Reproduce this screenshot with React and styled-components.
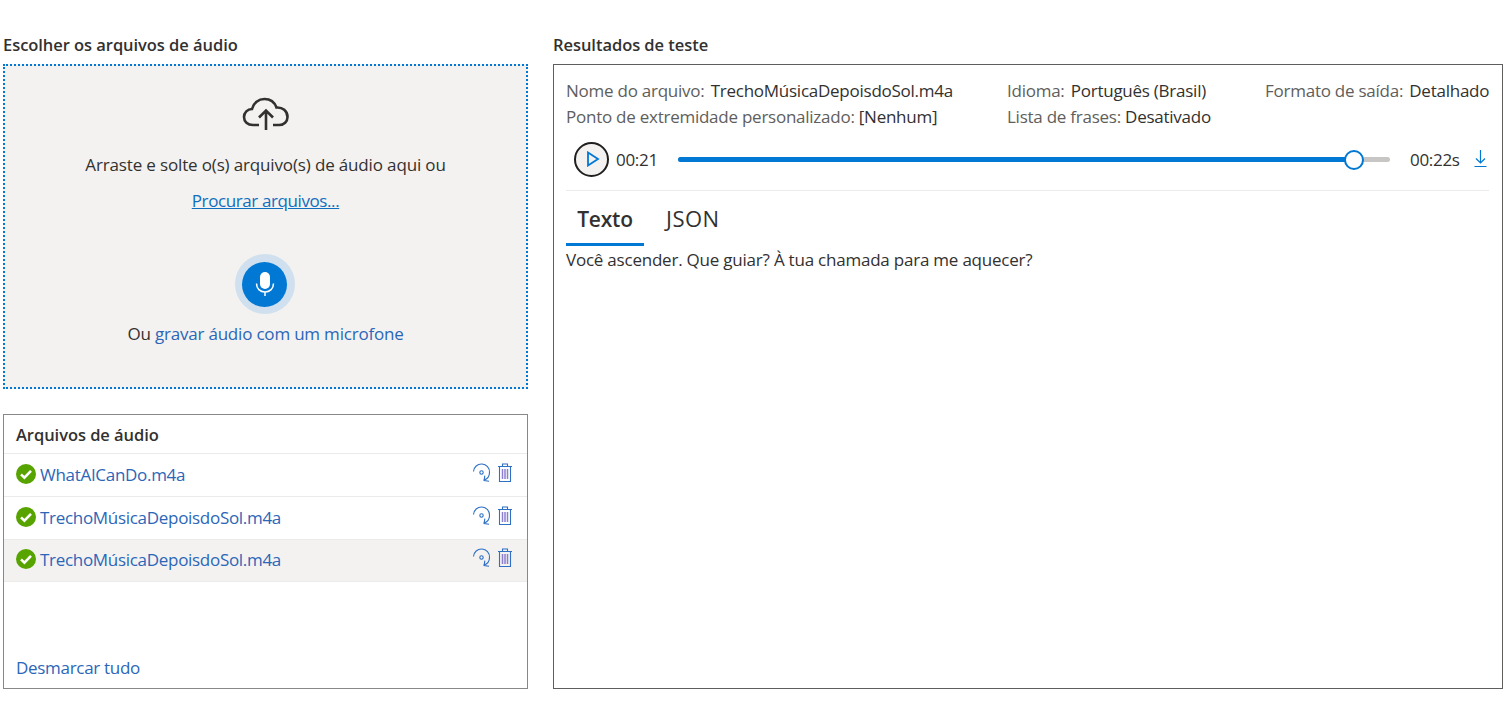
import React from "react";
import styled, { createGlobalStyle } from "styled-components";

const GlobalStyle = createGlobalStyle`
  html, body {
    margin: 0;
    padding: 0;
    background: #fff;
    color: #323130;
    font-family: "Open Sans", "Noto Sans", sans-serif;
    font-size: 17px;
  }
`;

function CheckIcon() {
  return (
    <svg width="20" height="20" viewBox="0 0 20 20">
      <circle cx="10" cy="10" r="10" fill="#57a300" />
      <path d="M5 10.4l3.4 3.3L15 6.9" fill="none" stroke="#fff" strokeWidth="2.6" />
    </svg>
  );
}

function RerunIcon() {
  return (
    <svg width="20" height="20" viewBox="0 0 20 20" fill="none" stroke="#2f6fc4" strokeWidth="1.1">
      <path d="M1.5 8.5A8 8 0 0 1 17.5 9.5c0 3.6-2.4 6.6-5.7 7.6" />
      <path d="M12.2 12.6v5h5" transform="rotate(8 12 17)" />
      <circle cx="9.5" cy="9.5" r="1.7" />
    </svg>
  );
}

function TrashIcon() {
  return (
    <svg width="16" height="20" viewBox="0 0 16 20" fill="none" stroke="#2f6fc4" strokeWidth="1.1">
      <path d="M1 3.5h14M5.5 3.5V1h5v2.5M2.5 3.5v15h11v-15" />
      <path d="M5.5 6v10M8 6v10M10.5 6v10" stroke="#8c7fd0" strokeWidth="1.5" />
    </svg>
  );
}

function FileRow({ name, selected }) {
  return (
    <Row $selected={selected}>
      <CheckIcon />
      <FileName>{name}</FileName>
      <RowActions>
        <RerunIcon />
        <TrashIcon />
      </RowActions>
    </Row>
  );
}

export default function App() {
  return (
    <>
      <GlobalStyle />
      <Page>
        <LeftColumn>
          <Title>Escolher os arquivos de áudio</Title>
          <DropZone>
            <svg width="48" height="36" viewBox="0 0 48 36" fill="none" stroke="#323130" strokeWidth="2.6">
              <path d="M17 29H11C5.5 29 2 25.5 2 21c0-4.5 3.5-8 8-8 1.5-6 6.5-10 12.5-10 5.5 0 10 3 12 8.5 6-.5 11 3.5 11 9.5 0 4.5-3.5 8-8.5 8H31" />
              <path d="M24 34V15M17 21.5l7-7 7 7" />
            </svg>
            <DropText>Arraste e solte o(s) arquivo(s) de áudio aqui ou</DropText>
            <BrowseLink>Procurar arquivos...</BrowseLink>
            <MicHalo>
              <MicButton>
                <svg width="20" height="26" viewBox="0 0 20 26">
                  <rect x="5" y="1" width="10" height="17" rx="5" fill="#fff" />
                  <path d="M1.5 12.5c0 5 3.5 8.5 8.5 8.5s8.5-3.5 8.5-8.5M10 21v4" fill="none" stroke="#fff" strokeWidth="1.5" />
                </svg>
              </MicButton>
            </MicHalo>
            <RecordText>
              Ou <span>gravar áudio com um microfone</span>
            </RecordText>
          </DropZone>
          <FileList>
            <ListTitle>Arquivos de áudio</ListTitle>
            <FileRow name="WhatAICanDo.m4a" />
            <FileRow name="TrechoMúsicaDepoisdoSol.m4a" />
            <FileRow name="TrechoMúsicaDepoisdoSol.m4a" selected />
            <ClearAll>Desmarcar tudo</ClearAll>
          </FileList>
        </LeftColumn>
        <RightColumn>
          <Title>Resultados de teste</Title>
          <ResultPanel>
            <MetaGrid>
              <Meta><em>Nome do arquivo:</em> TrechoMúsicaDepoisdoSol.m4a</Meta>
              <Meta><em>Idioma:</em> Português (Brasil)</Meta>
              <Meta><em>Formato de saída:</em> Detalhado</Meta>
              <Meta $tight><em>Ponto de extremidade personalizado:</em> [Nenhum]</Meta>
              <Meta $tight><em>Lista de frases:</em> Desativado</Meta>
            </MetaGrid>
            <Player>
              <PlayButton>
                <svg width="14" height="16" viewBox="0 0 14 16" fill="none" stroke="#0078d4" strokeWidth="1.8">
                  <path d="M2 1.5v13L12 8z" />
                </svg>
              </PlayButton>
              <Time>00:21</Time>
              <Track>
                <TrackFill style={{ width: `${(676 / 712) * 100}%` }} />
                <Thumb />
              </Track>
              <EndTime>00:22s</EndTime>
              <svg width="14" height="18" viewBox="0 0 14 18" fill="none" stroke="#0078d4" strokeWidth="1.2">
                <path d="M6.5 0v13M2 8.5L6.5 13 11 8.5M.5 16.5h12" />
              </svg>
            </Player>
            <Tabs>
              <Tab $active>Texto</Tab>
              <Tab>JSON</Tab>
            </Tabs>
            <Transcript>Você ascender. Que guiar? À tua chamada para me aquecer?</Transcript>
          </ResultPanel>
        </RightColumn>
      </Page>
    </>
  );
}

const Page = styled.div`
  display: flex;
  gap: 25px;
  width: 1507px;
  height: 704px;
  box-sizing: border-box;
  padding: 33px 4px 15px 3px;
  overflow: hidden;
`;
const LeftColumn = styled.div`
  width: 525px;
  flex: none;
  display: flex;
  flex-direction: column;
`;
const RightColumn = styled.div`
  width: 950px;
  flex: none;
  min-width: 0;
  display: flex;
  flex-direction: column;
`;
const Title = styled.div`
  height: 31px;
  line-height: 24px;
  font-size: 16.5px;
  font-weight: 600;
  letter-spacing: -0.05px;
`;
const DropZone = styled.div`
  box-sizing: border-box;
  height: 325px;
  border: 2px dotted #0078d4;
  background: #f3f2f1;
  display: flex;
  flex-direction: column;
  align-items: center;
  padding-top: 30px;
`;
const DropText = styled.div`
  margin-top: 21px;
  line-height: 24px;
  letter-spacing: -0.15px;
`;
const BrowseLink = styled.a`
  margin-top: 12px;
  line-height: 24px;
  color: #106ebe;
  text-decoration: underline;
  letter-spacing: -0.4px;
`;
const MicHalo = styled.div`
  margin: 41px 2px 0 0;
  width: 60px;
  height: 60px;
  border-radius: 50%;
  background: #d0e0ee;
  display: flex;
  align-items: center;
  justify-content: center;
`;
const MicButton = styled.div`
  width: 45px;
  height: 45px;
  border-radius: 50%;
  background: #0078d4;
  display: flex;
  align-items: center;
  justify-content: center;
`;
const RecordText = styled.div`
  margin-top: 8px;
  line-height: 24px;
  letter-spacing: -0.2px;
  span {
    color: #2b66b8;
  }
`;
const FileList = styled.div`
  box-sizing: border-box;
  height: 275px;
  margin-top: 25px;
  border: 1px solid #8a8886;
  display: flex;
  flex-direction: column;
`;
const ListTitle = styled.div`
  height: 39px;
  padding: 8px 12px 0;
  box-sizing: border-box;
  line-height: 24px;
  font-size: 16.5px;
  font-weight: 600;
  letter-spacing: -0.05px;
  border-bottom: 1px solid #edebe9;
`;
const Row = styled.div`
  height: ${(p) => (p.$selected ? "42px" : "43px")};
  box-sizing: border-box;
  display: flex;
  align-items: center;
  gap: 4px;
  padding: 0 14px ${(p) => (p.$selected ? "3px" : "2px")} 12px;
  border-bottom: 1px solid #edebe9;
  background: ${(p) => (p.$selected ? "#f3f2f1" : "#fff")};
`;
const FileName = styled.span`
  flex: 1;
  color: #2b66b8;
  letter-spacing: -0.3px;
`;
const RowActions = styled.div`
  display: flex;
  align-items: center;
  gap: 5px;
  margin-top: -2px;
`;
const ClearAll = styled.a`
  margin-top: auto;
  padding: 0 12px 8px;
  line-height: 24px;
  color: #2b66b8;
  letter-spacing: -0.3px;
`;
const ResultPanel = styled.div`
  box-sizing: border-box;
  height: 625px;
  border: 1px solid #605e5c;
  padding: 13px 13px 0 12px;
`;
const MetaGrid = styled.div`
  display: grid;
  grid-template-columns: 441px 258px minmax(0, 1fr);
  grid-auto-rows: 26px;
  line-height: 26px;
  letter-spacing: -0.25px;
  white-space: nowrap;
`;
const Meta = styled.div`
  em {
    font-style: normal;
    color: #605e5c;
    margin-right: ${(p) => (p.$tight ? "0" : "2px")};
  }
`;
const Player = styled.div`
  height: 52px;
  box-sizing: border-box;
  margin-top: 9px;
  display: flex;
  align-items: center;
  padding: 0 1px 11px 8px;
  border-bottom: 1px solid #edebe9;
`;
const PlayButton = styled.div`
  box-sizing: border-box;
  width: 35px;
  height: 35px;
  border: 2px solid #201f1e;
  border-radius: 50%;
  background: #f3f2f1;
  display: flex;
  align-items: center;
  justify-content: center;
  padding-left: 2px;
`;
const Time = styled.span`
  width: 62px;
  margin-left: 7px;
  letter-spacing: -0.3px;
`;
const Track = styled.div`
  position: relative;
  width: 712px;
  height: 5px;
  border-radius: 3px;
  background: #c8c6c4;
`;
const TrackFill = styled.div`
  height: 100%;
  border-radius: 3px;
  background: #0078d4;
`;
const Thumb = styled.div`
  position: absolute;
  left: 666px;
  top: -7px;
  box-sizing: border-box;
  width: 20px;
  height: 20px;
  border: 2px solid #0078d4;
  border-radius: 50%;
  background: #fff;
`;
const EndTime = styled.span`
  width: 64px;
  margin-left: 20px;
  letter-spacing: -0.3px;
`;
const Tabs = styled.div`
  display: flex;
  height: 55px;
`;
const Tab = styled.div`
  box-sizing: border-box;
  width: ${(p) => (p.$active ? "78px" : "auto")};
  padding: 0 ${(p) => (p.$active ? "0" : "22px")};
  text-align: center;
  height: 55px;
  line-height: ${(p) => (p.$active ? "57px" : "54px")};
  font-size: ${(p) => (p.$active ? "21px" : "22px")};
  font-weight: ${(p) => (p.$active ? 600 : 400)};
  letter-spacing: ${(p) => (p.$active ? "-0.2px" : "0.5px")};
  border-bottom: 3px solid ${(p) => (p.$active ? "#0078d4" : "transparent")};
`;
const Transcript = styled.div`
  line-height: 28px;
  letter-spacing: -0.22px;
`;
